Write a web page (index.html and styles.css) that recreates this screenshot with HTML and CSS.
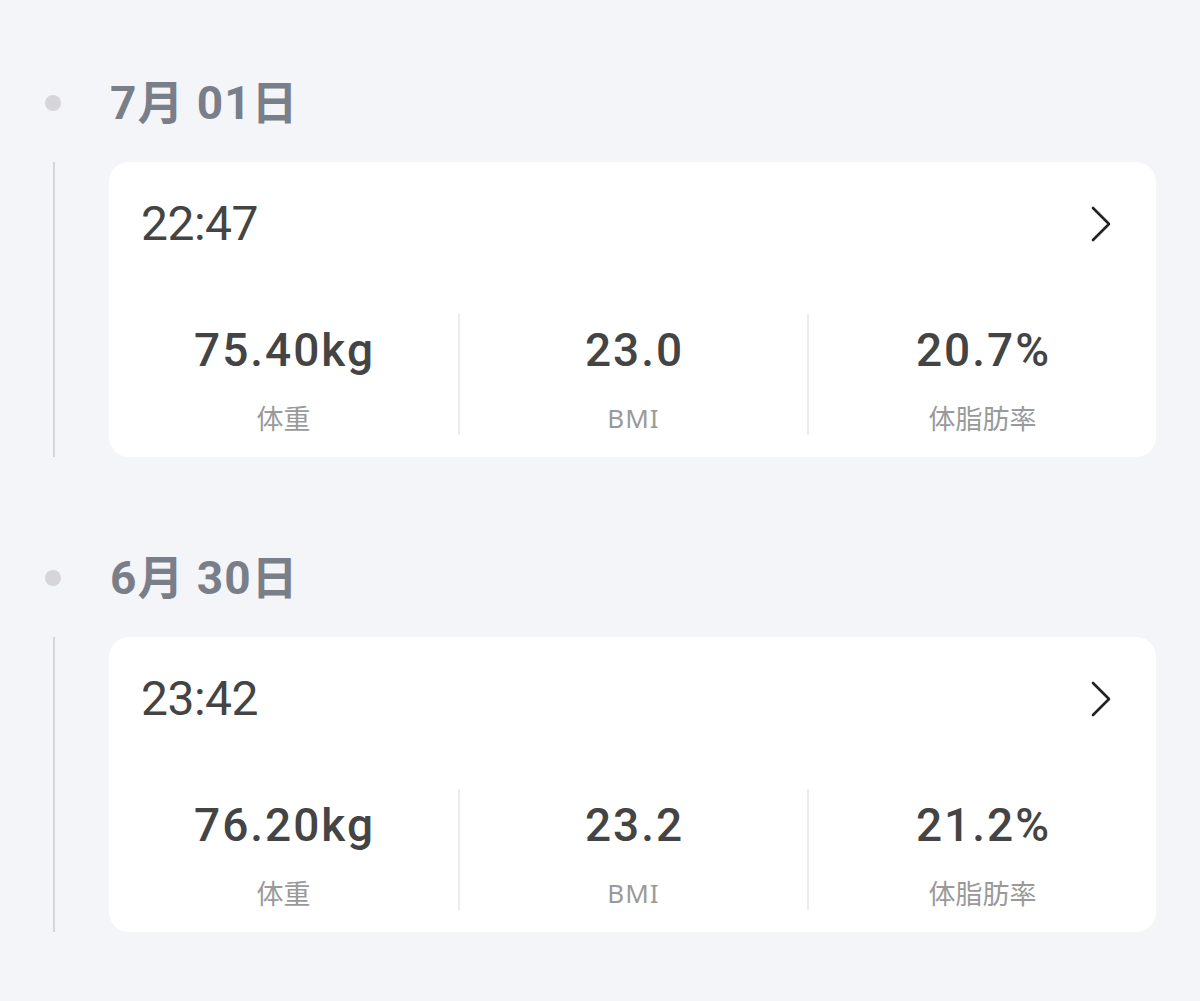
FILE: index.html
```html
<!DOCTYPE html>
<html lang="ja">
<head>
<meta charset="utf-8">
<title>記録</title>
<link rel="stylesheet" href="styles.css">
</head>
<body>
<main class="timeline">
  <section class="group">
    <div class="date-row">
      <span class="dot"></span>
      <h2 class="date">7月 01日</h2>
    </div>
    <div class="entry">
      <article class="card">
        <div class="card-head">
          <span class="time">22:47</span>
          <svg class="chev" width="22" height="36" viewBox="0 0 22 36"><polyline points="3,2 19,18 3,34" fill="none" stroke="#222" stroke-width="2.6" stroke-linecap="round" stroke-linejoin="round"/></svg>
        </div>
        <div class="stats">
          <div class="stat"><div class="val">75.40kg</div><div class="lbl">体重</div></div>
          <div class="stat"><div class="val">23.0</div><div class="lbl bmi">BMI</div></div>
          <div class="stat"><div class="val">20.7%</div><div class="lbl">体脂肪率</div></div>
        </div>
      </article>
    </div>
  </section>
  <section class="group">
    <div class="date-row">
      <span class="dot"></span>
      <h2 class="date">6月 30日</h2>
    </div>
    <div class="entry">
      <article class="card">
        <div class="card-head">
          <span class="time">23:42</span>
          <svg class="chev" width="22" height="36" viewBox="0 0 22 36"><polyline points="3,2 19,18 3,34" fill="none" stroke="#222" stroke-width="2.6" stroke-linecap="round" stroke-linejoin="round"/></svg>
        </div>
        <div class="stats">
          <div class="stat"><div class="val">76.20kg</div><div class="lbl">体重</div></div>
          <div class="stat"><div class="val">23.2</div><div class="lbl bmi">BMI</div></div>
          <div class="stat"><div class="val">21.2%</div><div class="lbl">体脂肪率</div></div>
        </div>
      </article>
    </div>
  </section>
</main>
</body>
</html>
```
FILE: styles.css
```css
* { box-sizing: border-box; }
html, body { margin: 0; padding: 0; }
body {
  background: #f4f5f9;
  font-family: Roboto, "Noto Sans CJK JP", sans-serif;
  width: 1200px;
  height: 1001px;
  overflow: hidden;
}
.timeline {
  padding-top: 68px;
}
.group + .group {
  margin-top: 86px;
}
.date-row {
  display: flex;
  align-items: center;
  height: 70px;
}
.dot {
  width: 16px;
  height: 16px;
  border-radius: 50%;
  background: #d6d6d9;
  margin-left: 45px;
}
.date {
  margin: 0 0 0 49px;
  font-size: 46px;
  font-weight: 700;
  color: #7a7e89;
  letter-spacing: 1px;
  line-height: 70px;
}
.entry {
  margin-top: 24px;
  margin-left: 53px;
  margin-right: 44px;
  padding-left: 54px;
  border-left: 2px solid #d6d6d6;
}
.card {
  background: #fff;
  border-radius: 20px;
  height: 295px;
  padding: 30px 32px 20px 32px;
}
.card-head {
  display: flex;
  justify-content: space-between;
  align-items: center;
  height: 64px;
}
.time {
  font-size: 48px;
  line-height: 64px;
  font-weight: 400;
  color: #444;
  letter-spacing: -0.5px;
}
.chev {
  margin-right: 12px;
}
.stats {
  margin: 58px -32px 0;
  display: grid;
  grid-template-columns: 1fr 1fr 1fr;
  height: 121px;
}
.stat {
  display: flex;
  flex-direction: column;
  align-items: center;
  padding-top: 8px;
}
.stat + .stat {
  border-left: 2px solid #ececec;
}
.val {
  font-size: 46px;
  line-height: 56px;
  font-weight: 500;
  color: #444;
  letter-spacing: 2px;
  margin-right: -2px;
}
.lbl {
  margin-top: 24px;
  font-size: 27px;
  line-height: 32px;
  color: #9a9a9a;
  font-family: "Noto Sans CJK JP", sans-serif;
}
.lbl.bmi {
  font-family: "Noto Sans", "Noto Sans CJK JP", sans-serif;
  font-size: 26px;
  letter-spacing: 1px;
}
```
